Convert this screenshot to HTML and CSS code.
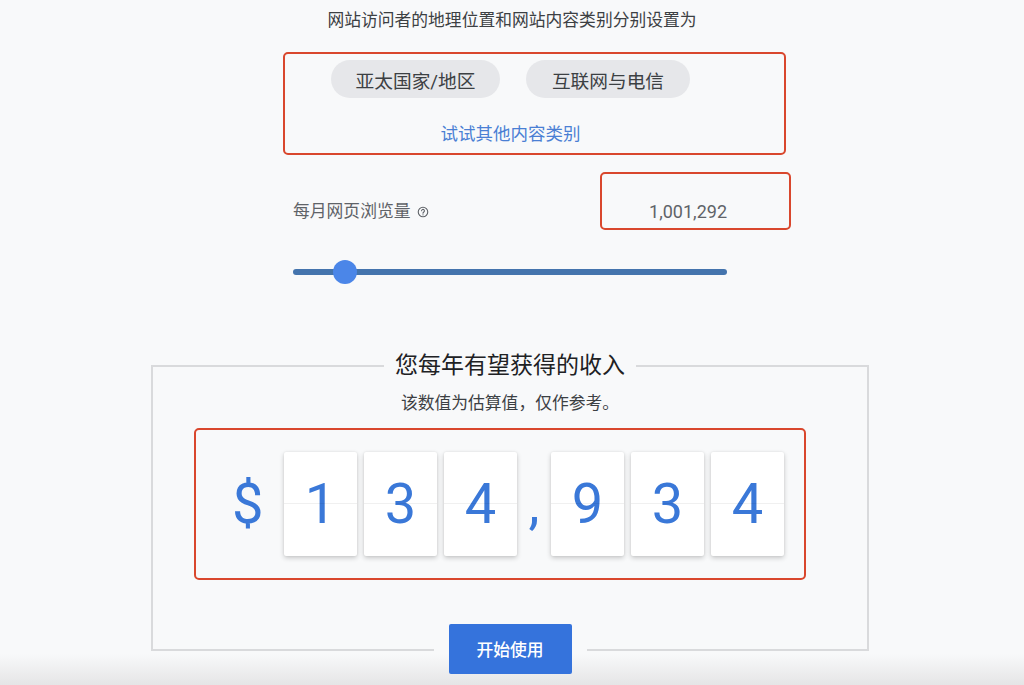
FILE: index.html
```html
<!DOCTYPE html>
<html lang="zh-CN">
<head>
<meta charset="utf-8">
<title>收入估算</title>
<link rel="stylesheet" href="styles.css">
</head>
<body>
<main class="page">
  <p class="intro">网站访问者的地理位置和网站内容类别分别设置为</p>

  <section class="hl category-box">
    <div class="category-inner">
      <div class="chips">
        <span class="chip chip-region">亚太国家/地区</span>
        <span class="chip chip-cat">互联网与电信</span>
      </div>
      <a class="try-link" href="#">试试其他内容类别</a>
    </div>
  </section>

  <section class="views-row">
    <div class="views-label">每月网页浏览量
      <svg class="help" viewBox="0 0 24 24" width="12" height="12" aria-hidden="true">
        <circle cx="12" cy="12" r="9.5" fill="none" stroke="#5f6368" stroke-width="2.2"/>
        <path d="M9.2 9.6a2.8 2.8 0 1 1 4.4 2.3c-1 .7-1.6 1.2-1.6 2.6" fill="none" stroke="#5f6368" stroke-width="2.2" stroke-linecap="round"/>
        <circle cx="12" cy="17.6" r="1.3" fill="#5f6368"/>
      </svg>
    </div>
    <div class="hl views-value">1,001,292</div>
  </section>

  <div class="slider">
    <div class="track"></div>
    <div class="thumb"></div>
  </div>

  <section class="result">
    <h2 class="result-title">您每年有望获得的收入</h2>
    <p class="result-note">该数值为估算值，仅作参考。</p>
    <div class="hl amount">
      <span class="dollar">$</span>
      <span class="card">1</span>
      <span class="card">3</span>
      <span class="card">4</span>
      <span class="comma">,</span>
      <span class="card">9</span>
      <span class="card">3</span>
      <span class="card">4</span>
    </div>
    <div class="cta-wrap">
      <button class="cta" type="button">开始使用</button>
    </div>
  </section>
</main>
</body>
</html>
```

FILE: styles.css
```css
html {
  min-height: 100%;
  background: linear-gradient(to bottom, #f8f9fa 0, #f8f9fa 654px, #e5e5e6 685px) no-repeat;
  background-color: #e5e5e6;
}

body {
  margin: 0;
  min-height: 100vh;
  font-family: Roboto, "Noto Sans CJK SC", "Noto Sans", sans-serif;
  color: #3c4043;
}

.page {
  padding-top: 8px;
}

.intro {
  margin: 0;
  font-size: 16.8px;
  line-height: 24px;
  text-align: center;
  color: #3c4043;
}

.hl {
  border: 2px solid #d9472d;
  border-radius: 5px;
  box-sizing: border-box;
}

.category-box {
  width: 503px;
  height: 103px;
  margin: 20px 0 0 283px;
  padding: 6px 0 0 46px;
}

.category-inner {
  width: 359px;
  display: flex;
  flex-direction: column;
  align-items: center;
}

.chips {
  display: flex;
  gap: 26px;
}

.chip {
  height: 38px;
  border-radius: 19px;
  background: #e6e7ea;
  display: flex;
  align-items: center;
  justify-content: center;
  font-size: 18.7px;
  color: #3c4043;
}

.chip-region { width: 169px; }
.chip-cat { width: 164px; }

.try-link {
  margin-top: 24px;
  font-size: 17.5px;
  line-height: 24px;
  color: #4a7fd4;
  text-decoration: none;
}

.views-row {
  display: flex;
  justify-content: space-between;
  align-items: flex-start;
  width: 498px;
  margin: 17px 0 0 293px;
}

.views-label {
  margin-top: 27px;
  font-size: 16.8px;
  line-height: 24px;
  color: #5f6368;
  display: flex;
  align-items: center;
}

.help {
  margin-left: 7px;
  margin-top: 2px;
}

.views-value {
  width: 191px;
  height: 58px;
  padding: 26px 62px 0 0;
  text-align: right;
  font-size: 18px;
  line-height: 24px;
  color: #5f6368;
}

.slider {
  position: relative;
  width: 434px;
  height: 24px;
  margin: 30px 0 0 293px;
  display: flex;
  align-items: center;
}

.track {
  width: 100%;
  height: 6px;
  border-radius: 3px;
  background: #4474ad;
}

.thumb {
  position: absolute;
  left: 40px;
  top: 0;
  width: 24px;
  height: 24px;
  border-radius: 50%;
  background: #4b86e8;
}

.result {
  width: 718px;
  height: 286px;
  box-sizing: border-box;
  margin: 81px 0 0 151px;
  border: 2px solid #d9dadc;
  display: flex;
  flex-direction: column;
}

.result > * {
  flex-shrink: 0;
}

.result-title {
  align-self: center;
  margin: -17px 0 0;
  padding: 0 11px;
  background: #f8f9fa;
  font-size: 23px;
  font-weight: 400;
  line-height: 32px;
  color: #202124;
}

.result-note {
  margin: 9px 0 0;
  font-size: 16.8px;
  line-height: 24px;
  text-align: center;
  color: #3c4043;
}

.amount {
  width: 612px;
  height: 152px;
  margin: 13px 0 0 41px;
  padding-left: 36px;
  display: flex;
  align-items: center;
  font-family: Roboto, "Noto Sans", sans-serif;
  font-size: 56px;
  line-height: 104px;
  color: #3a78d8;
}

.dollar {
  width: 52px;
  text-align: left;
}

.card {
  position: relative;
  width: 73px;
  height: 104px;
  margin-right: 7px;
  background: #fff;
  border-radius: 2px;
  text-align: center;
  box-shadow: 0 2px 5px rgba(0, 0, 0, 0.2), 0 0 2px rgba(0, 0, 0, 0.08);
}

.card::after {
  content: "";
  position: absolute;
  left: 0;
  right: 0;
  top: 51px;
  height: 1px;
  background: rgba(0, 0, 0, 0.06);
}

.comma {
  width: 34px;
  margin-left: -7px;
  text-align: center;
}

.cta-wrap {
  align-self: center;
  margin-top: 44px;
  padding: 0 15px;
  background: linear-gradient(to bottom, transparent 23px, #f8f9fa 23px, #f8f9fa 27px, transparent 27px);
}

.cta {
  display: block;
  width: 123px;
  height: 50px;
  border: 0;
  border-radius: 2px;
  background: #3573dc;
  color: #fff;
  font-family: "Noto Sans CJK SC", sans-serif;
  font-size: 16.8px;
  font-weight: 500;
  cursor: pointer;
}
```
